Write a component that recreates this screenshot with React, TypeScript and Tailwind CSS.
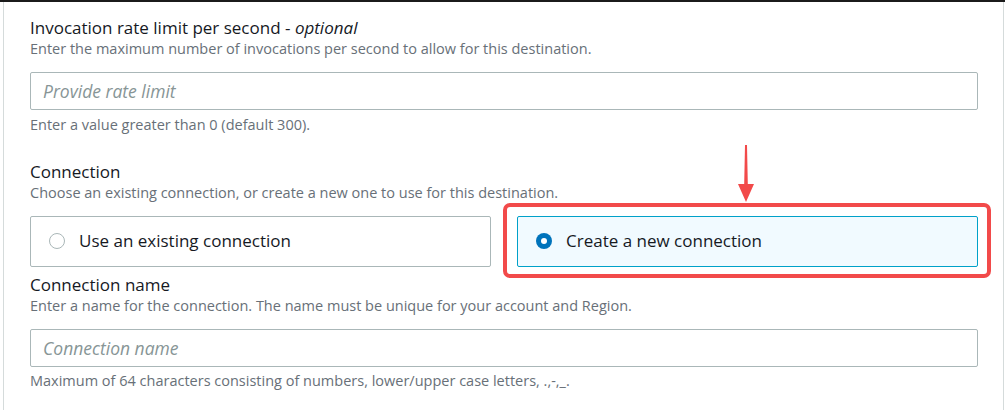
import React from "react";

const font = { fontFamily: '"Open Sans", "Noto Sans", Arial, sans-serif' };

function Field({
  title,
  optional,
  desc,
  children,
}: {
  title: string;
  optional?: boolean;
  desc: string;
  children: React.ReactNode;
}) {
  return (
    <div>
      <div className="text-[17px] leading-[22px] text-[#16191f]">
        {title}
        {optional && (
          <>
            {" - "}
            <i>optional</i>
          </>
        )}
      </div>
      <div className="text-[14.5px] leading-[20px] text-[#687078]">{desc}</div>
      {children}
    </div>
  );
}

function TextInput({ placeholder, top }: { placeholder: string; top: string }) {
  return (
    <div className={`${top} flex h-[38px] w-[948px] items-center rounded-[2px] border border-[#aab7b8] bg-white px-[12px]`}>
      <span className="text-[17.5px] italic text-[#879596]">{placeholder}</span>
    </div>
  );
}

function Radio({ checked }: { checked: boolean }) {
  return checked ? (
    <span className="flex h-[16px] w-[16px] items-center justify-center rounded-full bg-[#0073bb]">
      <span className="h-[6px] w-[6px] rounded-full bg-white" />
    </span>
  ) : (
    <span className="h-[16px] w-[16px] rounded-full border border-[#aab7b8] bg-white" />
  );
}

export default function App() {
  return (
    <div className="h-[410px] w-[1005px] overflow-hidden bg-white" style={font}>
      <div className="h-[2px] w-full bg-[#1b1b1b]" />
      <div className="relative ml-[3px] h-[408px] w-[1001px] border-l border-r border-[#d5dbdb] pl-[26px] pt-[15px]">
        <Field title="Invocation rate limit per second" optional desc="Enter the maximum number of invocations per second to allow for this destination.">
          <TextInput placeholder="Provide rate limit" top="mt-[13px]" />
          <div className="mt-[5px] text-[14.5px] leading-[20px] text-[#687078]">
            Enter a value greater than 0 (default 300).
          </div>
        </Field>

        <div className="mt-[26px]">
          <Field title="Connection" desc="Choose an existing connection, or create a new one to use for this destination.">
            <div className="mt-[13px] grid w-[948px] grid-cols-2 gap-[26px]">
              <div className="flex h-[51px] items-center gap-[14px] rounded-[2px] border border-[#aab7b8] bg-white pb-[2px] pl-[18px]">
                <Radio checked={false} />
                <span className="text-[17px] text-[#16191f]">Use an existing connection</span>
              </div>
              <div className="flex h-[51px] items-center gap-[14px] rounded-[2px] border border-[#00a1c9] bg-[#f1faff] pb-[2px] pl-[18px]">
                <Radio checked />
                <span className="text-[17px] text-[#16191f]">Create a new connection</span>
              </div>
            </div>
          </Field>
        </div>

        <div className="mt-[7px]">
          <Field title="Connection name" desc="Enter a name for the connection. The name must be unique for your account and Region.">
            <TextInput placeholder="Connection name" top="mt-[13px]" />
            <div className="mt-[4px] text-[14.5px] leading-[20px] text-[#687078]">
              Maximum of 64 characters consisting of numbers, lower/upper case letters, .,-,_.
            </div>
          </Field>
        </div>

        {/* annotation highlight */}
        <div className="pointer-events-none absolute left-[499px] top-[201px] h-[75px] w-[488px] rounded-[7px] border-[4px] border-[#f24a4a]" />
        <svg className="pointer-events-none absolute left-[732px] top-[143px]" width="20" height="60" viewBox="0 0 20 60">
          <polygon points="9,0 11,0 11.8,39 18,39 10,57 2,39 8.2,39" fill="#f24a4a" />
        </svg>
      </div>
    </div>
  );
}
